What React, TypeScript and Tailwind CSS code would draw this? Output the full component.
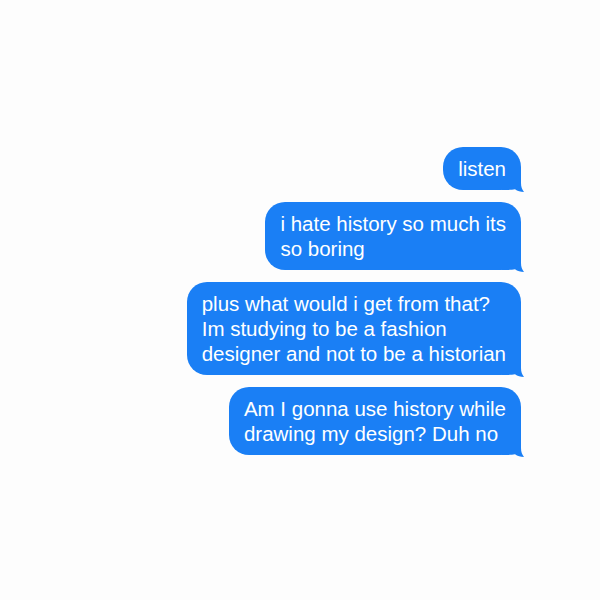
const messages: string[][] = [
  ["listen"],
  ["i hate history so much its", "so boring"],
  ["plus what would i get from that?", "Im studying to be a fashion", "designer and not to be a historian"],
  ["Am I gonna use history while", "drawing my design? Duh no"],
];

function Bubble({ lines }: { lines: string[] }) {
  return (
    <div className="relative rounded-[20px] bg-[#1a7ff5] px-[15px] py-[9px] text-[20.5px] leading-[25px] text-white">
      {lines.map((line, i) => (
        <div key={i} className="relative z-10 whitespace-nowrap">
          {line}
        </div>
      ))}
      {/* tail */}
      <svg
        className="absolute bottom-[-2px] right-[-3px]"
        width="22"
        height="22"
        viewBox="0 0 22 22"
      >
        <path
          d="M0 0 H19 V13 C19 17 20 19.5 22 22 C18.5 22 15.5 21 13 19.3 C10 20 6 20 0 20 Z"
          fill="#1a7ff5"
        />
      </svg>
    </div>
  );
}

export default function App() {
  return (
    <div
      className="flex h-[600px] w-[600px] flex-col items-end bg-[#fdfdfd] pr-[79px] pt-[147px]"
      style={{ fontFamily: '"Liberation Sans", Arial, sans-serif' }}
    >
      <div className="flex flex-col items-end gap-[12px]">
        {messages.map((m, i) => (
          <Bubble key={i} lines={m} />
        ))}
      </div>
    </div>
  );
}
